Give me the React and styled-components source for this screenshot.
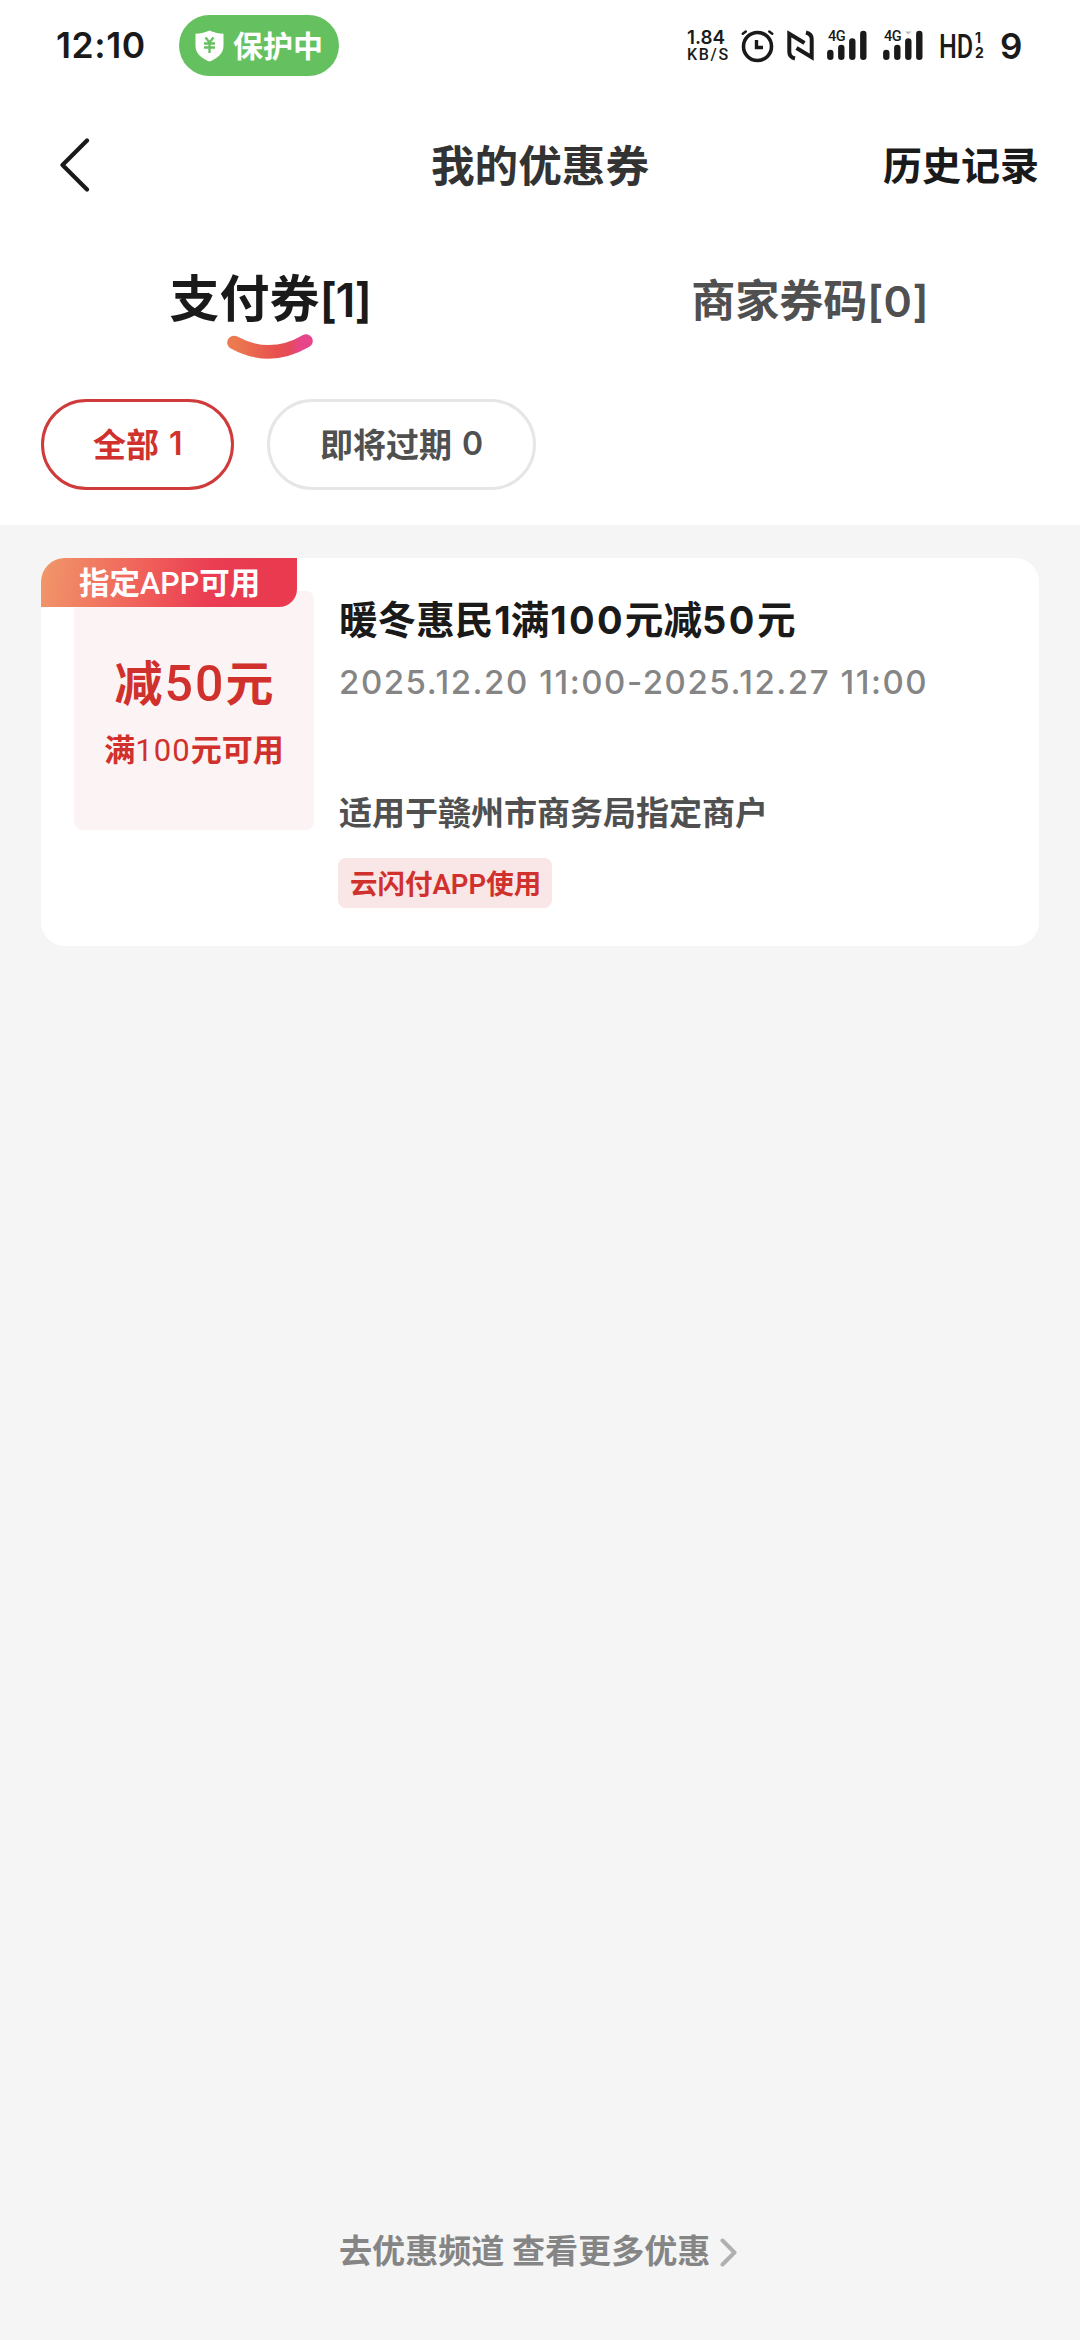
import React from 'react';
import styled, { createGlobalStyle } from 'styled-components';

const cjk = '"Noto Sans CJK SC", sans-serif';
const digits = 'Inter, "Noto Sans CJK SC", sans-serif';
const narrow = 'Roboto, "Noto Sans CJK SC", sans-serif';

const GlobalStyle = createGlobalStyle`
  * { box-sizing: border-box; }
  body { margin: 0; background: #f5f5f5; font-family: ${cjk}; }
`;

const Screen = styled.main`
  width: 1080px;
  height: 2340px;
  display: flex;
  flex-direction: column;
  background: #f5f5f5;
`;

const Header = styled.header`
  height: 525px;
  background: #fff;
  display: flex;
  flex-direction: column;
`;

const StatusBar = styled.div`
  height: 92px;
  padding: 0 53px 1px 56px;
  display: flex;
  align-items: center;
  color: #1a1a1a;
`;

const Latin = styled.span`
  font-family: ${(p) => p.$font || digits};
  font-size: ${(p) => p.$size || 'inherit'};
  font-weight: ${(p) => p.$weight || 'inherit'};
  letter-spacing: ${(p) => p.$gap || 0}px;
  line-height: 1;
  margin: 0 ${(p) => p.$after || 0}px 0 ${(p) => p.$before || 0}px;
`;

const Clock = styled.div`
  width: 123px;
  font: 600 35.5px/40px ${digits};
  letter-spacing: 0.6px;
  padding-top: 1px;
`;

const Guard = styled.div`
  width: 160px;
  height: 61px;
  padding-left: 16px;
  border-radius: 31px;
  display: flex;
  align-items: center;
  gap: 9px;
  background: #65c15f;
  color: #fff;
  font: 700 30px/40px ${cjk};
`;

const GuardText = styled.span`
  padding-bottom: 4px;
`;

const StatusIcons = styled.div`
  margin-left: auto;
  height: 40px;
  flex: none;
  width: 340px;
  display: flex;
  align-items: center;
`;

const Speed = styled.div`
  flex: none;
  width: 54px;
  display: flex;
  flex-direction: column;
  gap: 3px;
  font: 600 18.8px/14px ${digits};
`;

const Unit = styled.span`
  font: 500 16px/13px ${narrow};
  letter-spacing: 1.7px;
`;

const IconSlot = styled.span`
  display: flex;
  flex: none;
  width: ${(p) => p.$w}px;
`;

const Network = styled.span`
  flex: none;
  width: 56px;
  height: 31px;
  display: grid;
`;

const NetworkType = styled.span`
  grid-area: 1 / 1;
  font: 500 14.5px/14px ${narrow};
  letter-spacing: -0.6px;
  padding-left: 1px;
`;

const Bars = styled.svg`
  grid-area: 1 / 1;
`;

const Hd = styled.span`
  flex: none;
  font: 500 34px/40px ${narrow};
  width: 36px;
  white-space: nowrap;
  transform: scaleX(0.74);
  transform-origin: left center;
`;

const SimStack = styled.span`
  flex: none;
  width: 25px;
  display: flex;
  flex-direction: column;
  gap: 1px;
  font: 700 14px/14px ${digits};
`;

const Battery = styled.span`
  font: 600 35px/40px ${digits};
`;

const NavBar = styled.nav`
  height: 146px;
  padding: 0 41px 4px 60px;
  display: grid;
  grid-template-columns: 181px 1fr 200px;
  align-items: center;
`;

const Title = styled.h1`
  margin: 0;
  text-align: center;
  color: #333;
  font: 700 43.6px/60px ${cjk};
`;

const BackIcon = styled.svg`
  margin-top: 4px;
`;

const History = styled.span`
  text-align: right;
  color: #1a1a1a;
  font: 700 39px/56px ${cjk};
  white-space: nowrap;
`;

const Tabs = styled.div`
  height: 161px;
  display: grid;
  grid-template-columns: 1fr 1fr;
`;

const Tab = styled.div`
  display: flex;
  flex-direction: column;
  align-items: center;
  padding-top: ${(p) => (p.$active ? 22 : 25)}px;
  color: ${(p) => (p.$active ? '#1a1a1a' : '#505050')};
  font: 700 ${(p) => (p.$active ? 50 : 44)}px/70px ${cjk};
  white-space: nowrap;
`;

const Smile = styled.svg`
  margin-top: 4px;
`;

const Chips = styled.div`
  display: flex;
  gap: 33px;
  padding: 0 41px;
`;

const Chip = styled.div`
  width: ${(p) => p.$w}px;
  height: 91px;
  border: 3px solid ${(p) => (p.$active ? '#cf3a3a' : '#e6e6e6')};
  border-radius: 46px;
  padding-left: ${(p) => p.$pad}px;
  display: flex;
  align-items: center;
  gap: 10px;
  padding-bottom: 3px;
  color: ${(p) => (p.$active ? '#d0312d' : '#505050')};
  font: 700 33px/46px ${cjk};
  white-space: nowrap;
`;

const Count = styled.span`
  padding-top: 2px;
  font: 600 32px/46px ${digits};
`;

const Card = styled.section`
  width: 998px;
  height: 388px;
  margin: 33px 0 0 41px;
  border-radius: 24px;
  background: #fff;
  padding: 33px 33px 0;
  display: flex;
  gap: 25px;
  position: relative;
`;

const Ribbon = styled.div`
  position: absolute;
  left: 0;
  top: 0;
  width: 256px;
  height: 49px;
  border-radius: 24px 0 18px 0;
  background: linear-gradient(100deg, #f0986a 0%, #f0605a 40%, #ea3c52 66%, #e93a4e 100%);
  color: #fff;
  padding-left: 38px;
  font: 700 30.5px/46px ${cjk};
  white-space: nowrap;
`;

const Amount = styled.div`
  width: 240px;
  height: 239px;
  border-radius: 8px;
  background: #fbf3f4;
  color: #d0312d;
  display: flex;
  flex-direction: column;
  align-items: center;
  padding-top: 56px;
  white-space: nowrap;
`;

const Value = styled.div`
  font: 700 48px/66px ${cjk};
`;

const Condition = styled.div`
  margin-top: 12px;
  font: 700 31px/46px ${cjk};
`;

const Info = styled.div`
  display: flex;
  flex-direction: column;
  align-items: flex-start;
  white-space: nowrap;
`;

const CouponName = styled.h2`
  margin: -1px 0 0;
  color: #1a1a1a;
  font: 700 38.6px/54px ${cjk};
`;

const Period = styled.div`
  margin-top: 16px;
  color: #858585;
  font: 500 33px/44px ${digits};
  letter-spacing: 1.55px;
`;

const Scope = styled.div`
  margin-top: 83px;
  color: #505050;
  font: 700 33px/48px ${cjk};
`;

const Tag = styled.div`
  margin: 23px 0 0 -1px;
  height: 50px;
  width: 214px;
  border-radius: 8px;
  background: #f9e6e7;
  color: #d0312d;
  padding-left: 12px;
  font: 700 27.5px/48px ${cjk};
`;

const More = styled.footer`
  margin-top: auto;
  height: 180px;
  padding: 65px 0 0 339px;
  display: flex;
  gap: 10px;
  align-items: flex-start;
  color: #858585;
  font: 700 33.1px/48px ${cjk};
  white-space: nowrap;
`;

const MoreArrow = styled.svg`
  margin-top: 13px;
`;

const Shield = () => (
  <svg width="29" height="32" viewBox="0 0 29 32">
    <path d="M14.5 0.5C18.5 2.6 23 3.4 28.5 3.8V16C28.5 24 21.5 28.8 14.5 31.5C7.500 28.800 0.500 24 0.500 16V3.800C6 3.400 10.500 2.600 14.500 0.500Z" fill="#fff" />
    <path d="M10.500 7.500L14.500 12.500L18.500 7.500M9 13.500H20M9 17.500H20M14.500 12.500V23" fill="none" stroke="#65c15f" strokeWidth="2.300" />
  </svg>
);

const Alarm = () => (
  <svg width="34" height="34" viewBox="0 0 34 34" fill="none" stroke="#1a1a1a" strokeLinecap="round">
    <circle cx="16.500" cy="17.500" r="14" strokeWidth="3.600" />
    <path d="M15.500 11V18.500H22" strokeWidth="3.400" strokeLinecap="butt" />
    <path d="M1.800 4.800L4.800 2.500M31.200 4.800L28.200 2.500" strokeWidth="2.500" />
  </svg>
);

const Nfc = () => (
  <svg width="27" height="31" viewBox="0 0 27 31" fill="none" stroke="#1a1a1a" strokeWidth="4">
    <path d="M8 28.500C4 27.500 2.300 25.500 2.300 22V3.800L17.500 13" />
    <path d="M19 2.500C23 3.500 24.700 5.500 24.700 9V27.200L9.500 18" />
  </svg>
);

const Signal = ({ dot }) => (
  <Network>
    <NetworkType>4G</NetworkType>
    <Bars width="40" height="31" viewBox="0 0 40 31">
      {dot && <path d="M22 1.500H28.500L25.300 4.500Z" fill="#bbb" />}
      <path d="M3.300 23V26.700M14.300 18V26.700M25.300 11.500V26.700M36.300 4V26.700" stroke="#1a1a1a" strokeWidth="6.400" strokeLinecap="round" />
    </Bars>
  </Network>
);

export default function App() {
  return (
    <Screen>
      <GlobalStyle />
      <Header>
        <StatusBar>
          <Clock>12:10</Clock>
          <Guard>
            <Shield />
            <GuardText>保护中</GuardText>
          </Guard>
          <StatusIcons>
            <Speed>
              <span>1.84</span>
              <Unit>KB/S</Unit>
            </Speed>
            <IconSlot $w={46}><Alarm /></IconSlot>
            <IconSlot $w={40}><Nfc /></IconSlot>
            <Signal />
            <Signal dot />
            <Hd>HD</Hd>
            <SimStack>
              <span>1</span>
              <span>2</span>
            </SimStack>
            <Battery>9</Battery>
          </StatusIcons>
        </StatusBar>
        <NavBar>
          <BackIcon width="32" height="58" viewBox="0 0 32 58">
            <path d="M27 4.500L2.500 29L27 53.500" fill="none" stroke="#1a1a1a" strokeWidth="4.200" strokeLinecap="round" strokeLinejoin="round" />
          </BackIcon>
          <Title>我的优惠券</Title>
          <History>历史记录</History>
        </NavBar>
        <Tabs>
          <Tab $active>
            <span>支付券<Latin $size="47px" $gap={-1.5} $weight={600}>[1]</Latin></span>
            <Smile width="88" height="28" viewBox="0 0 88 28">
              <defs>
                <linearGradient id="smile" x1="0" x2="1">
                  <stop offset="0" stopColor="#ec7a50" />
                  <stop offset="0.600" stopColor="#e8504e" />
                  <stop offset="0.780" stopColor="#e54a5a" />
                  <stop offset="0.920" stopColor="#e6458a" />
                </linearGradient>
              </defs>
              <path d="M8 8.500Q44 28 80 7" fill="none" stroke="url(#smile)" strokeWidth="13.500" strokeLinecap="round" />
            </Smile>
          </Tab>
          <Tab>
            <span>商家券码<Latin $size="43px" $gap={0.4} $weight={600}>[0]</Latin></span>
          </Tab>
        </Tabs>
        <Chips>
          <Chip $active $w={193} $pad={49}>
            <span>全部</span>
            <Count>1</Count>
          </Chip>
          <Chip $w={269} $pad={50}>
            <span>即将过期</span>
            <Count>0</Count>
          </Chip>
        </Chips>
      </Header>
      <Card>
        <Amount>
          <Value>减<Latin $font={narrow} $weight={500} $size="50px" $gap={2} $before={2}>50</Latin>元</Value>
          <Condition>满<Latin $font={narrow} $weight={400} $size="31px" $gap={1}>100</Latin>元可用</Condition>
        </Amount>
        <Info>
          <CouponName>
            暖冬惠民<Latin $size="38px" $before={1}>1</Latin>满<Latin $size="38px" $gap={2.3} $before={1}>100</Latin>元减<Latin $size="38px" $gap={2.6}>50</Latin>元
          </CouponName>
          <Period>2025.12.20 11:00-2025.12.27 11:00</Period>
          <Scope>适用于赣州市商务局指定商户</Scope>
          <Tag>云闪付<Latin $font={narrow} $weight={600}>APP</Latin>使用</Tag>
        </Info>
        <Ribbon>指定<Latin $font={narrow} $weight={500}>APP</Latin>可用</Ribbon>
      </Card>
      <More>
        <span>去优惠频道 查看更多优惠</span>
        <MoreArrow width="18" height="29" viewBox="0 0 18 29">
          <path d="M2.500 2.500L14.500 14.500L2.500 26.500" fill="none" stroke="#b0b0b0" strokeWidth="4" strokeLinecap="round" strokeLinejoin="round" />
        </MoreArrow>
      </More>
    </Screen>
  );
}
